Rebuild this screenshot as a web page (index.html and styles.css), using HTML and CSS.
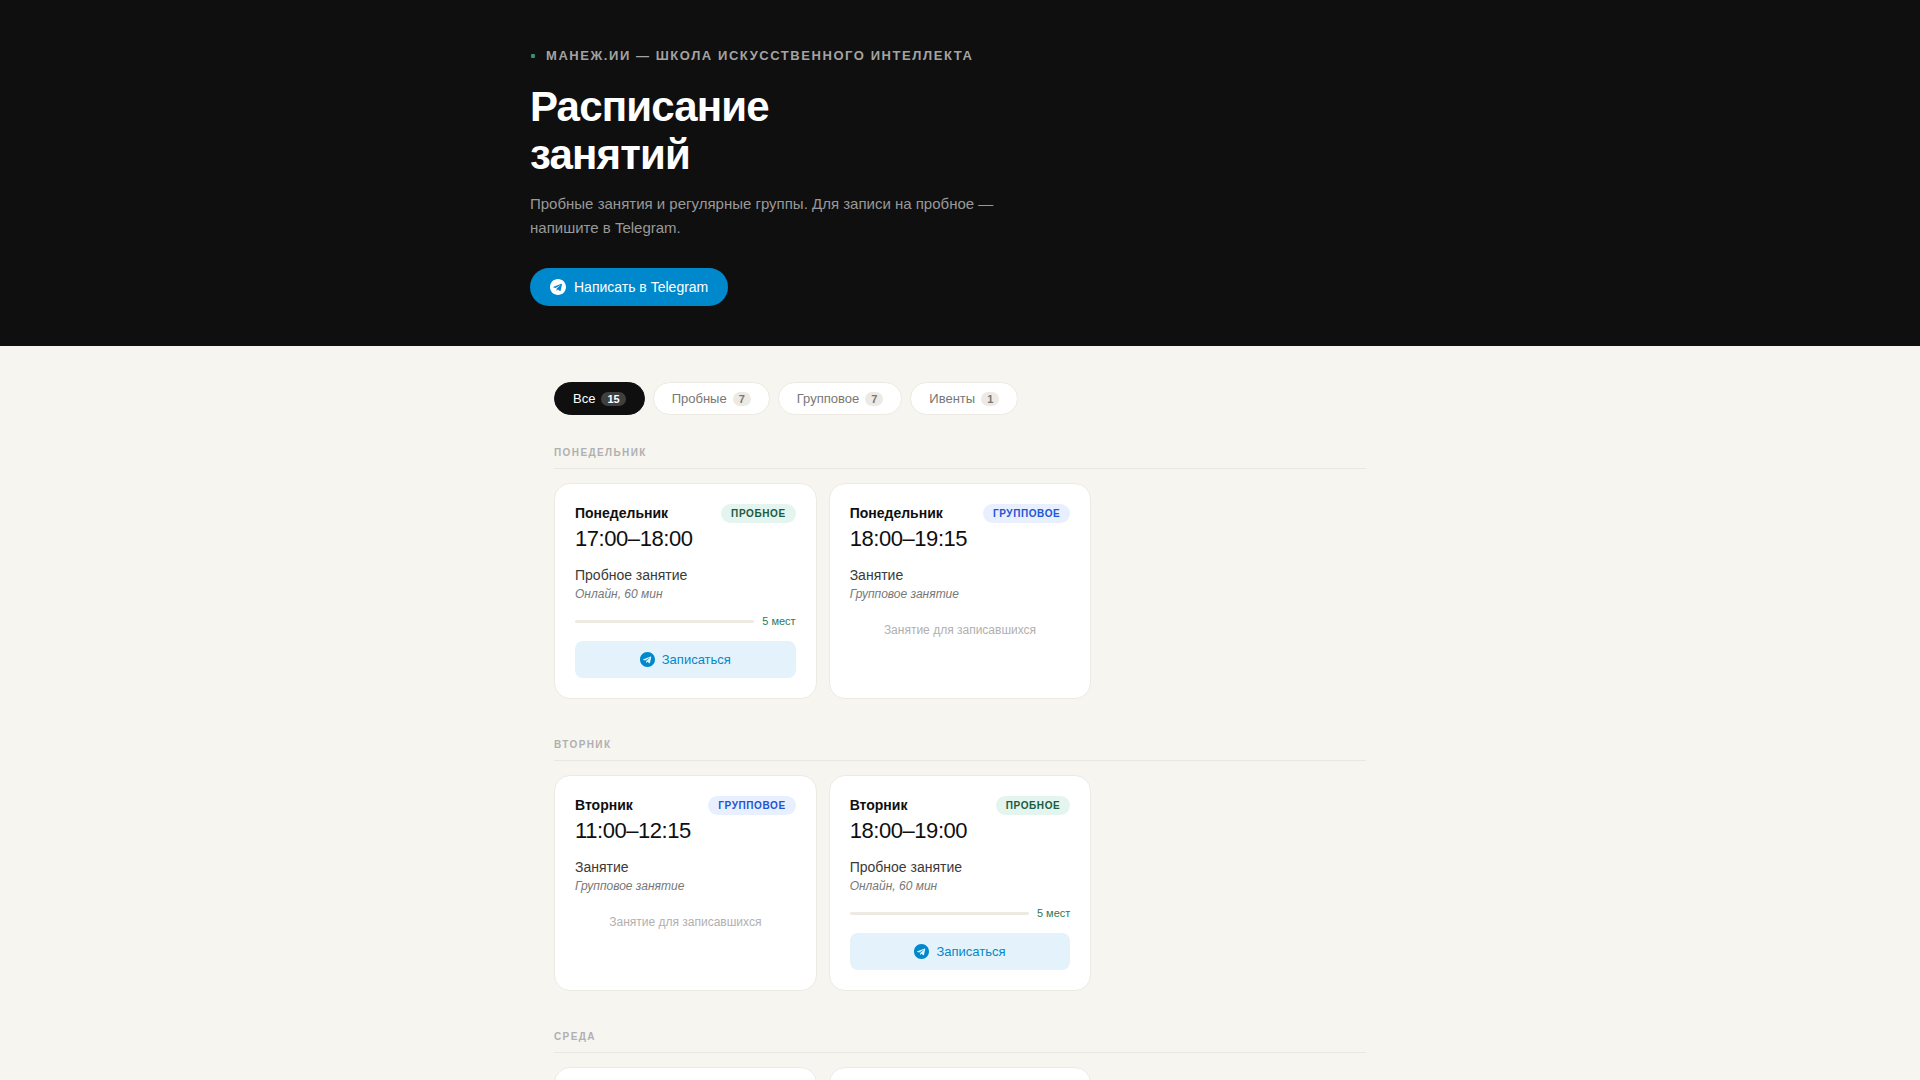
FILE: index.html
```html
<!DOCTYPE html>
<html lang="ru">
<head>
    <meta charset="UTF-8">
    <meta name="viewport" content="width=device-width, initial-scale=1.0">
    <title>Расписание занятий — Манеж.ИИ</title>
    <link rel="stylesheet" href="styles.css">
</head>
<body>
    <svg class="sprite" aria-hidden="true">
        <symbol id="tg" viewBox="0 0 24 24">
            <path d="M12 0C5.373 0 0 5.373 0 12s5.373 12 12 12 12-5.373 12-12S18.627 0 12 0zm5.894 8.221l-1.97 9.28c-.145.658-.537.818-1.084.508l-3-2.21-1.447 1.394c-.16.16-.295.295-.605.295l.213-3.053 5.56-5.023c.242-.213-.054-.333-.373-.12l-6.871 4.326-2.962-.924c-.643-.204-.657-.643.136-.953l11.57-4.461c.537-.194 1.006.131.833.941z"/>
        </symbol>
    </svg>

    <header class="hero">
        <div class="hero-inner">
            <div class="eyebrow"><span class="dot"></span>Манеж.ИИ — Школа искусственного интеллекта</div>
            <h1>Расписание<br>занятий</h1>
            <p class="hero-sub">Пробные занятия и регулярные группы. Для записи на пробное — напишите в Telegram.</p>
            <a class="tg-btn" href="#"><svg class="icon"><use href="#tg"/></svg>Написать в Telegram</a>
        </div>
    </header>

    <main class="main">
        <div class="filters">
            <button class="filter active" type="button">Все <span class="count">15</span></button>
            <button class="filter" type="button">Пробные <span class="count">7</span></button>
            <button class="filter" type="button">Групповое <span class="count">7</span></button>
            <button class="filter" type="button">Ивенты <span class="count">1</span></button>
        </div>

        <section class="day">
            <h2 class="day-title">Понедельник</h2>
            <div class="cards">
                <article class="card">
                    <div class="card-top">
                        <div>
                            <div class="card-day">Понедельник</div>
                            <div class="card-time">17:00–18:00</div>
                        </div>
                        <span class="badge trial">Пробное</span>
                    </div>
                    <div class="card-info">
                        <div class="card-name">Пробное занятие</div>
                        <div class="card-note">Онлайн, 60 мин</div>
                    </div>
                    <div class="seats"><div class="seats-bar"></div><span class="seats-text">5 мест</span></div>
                    <a class="book-btn" href="#"><svg class="icon small"><use href="#tg"/></svg>Записаться</a>
                </article>
                <article class="card">
                    <div class="card-top">
                        <div>
                            <div class="card-day">Понедельник</div>
                            <div class="card-time">18:00–19:15</div>
                        </div>
                        <span class="badge group">Групповое</span>
                    </div>
                    <div class="card-info">
                        <div class="card-name">Занятие</div>
                        <div class="card-note">Групповое занятие</div>
                    </div>
                    <div class="closed">Занятие для записавшихся</div>
                </article>
            </div>
        </section>

        <section class="day">
            <h2 class="day-title">Вторник</h2>
            <div class="cards">
                <article class="card">
                    <div class="card-top">
                        <div>
                            <div class="card-day">Вторник</div>
                            <div class="card-time">11:00–12:15</div>
                        </div>
                        <span class="badge group">Групповое</span>
                    </div>
                    <div class="card-info">
                        <div class="card-name">Занятие</div>
                        <div class="card-note">Групповое занятие</div>
                    </div>
                    <div class="closed">Занятие для записавшихся</div>
                </article>
                <article class="card">
                    <div class="card-top">
                        <div>
                            <div class="card-day">Вторник</div>
                            <div class="card-time">18:00–19:00</div>
                        </div>
                        <span class="badge trial">Пробное</span>
                    </div>
                    <div class="card-info">
                        <div class="card-name">Пробное занятие</div>
                        <div class="card-note">Онлайн, 60 мин</div>
                    </div>
                    <div class="seats"><div class="seats-bar"></div><span class="seats-text">5 мест</span></div>
                    <a class="book-btn" href="#"><svg class="icon small"><use href="#tg"/></svg>Записаться</a>
                </article>
            </div>
        </section>

        <section class="day">
            <h2 class="day-title">Среда</h2>
            <div class="cards">
                <article class="card"></article>
                <article class="card"></article>
            </div>
        </section>
    </main>
</body>
</html>
```
FILE: styles.css
```css
* {
    box-sizing: border-box;
    margin: 0;
    padding: 0;
}
body {
    font-family: "Liberation Sans", Arial, sans-serif;
    background: #f6f5f0;
    color: #0f0f0f;
    height: 100vh;
    overflow: hidden;
}
.sprite {
    display: none;
}
.icon {
    width: 16px;
    height: 16px;
    fill: currentColor;
    flex-shrink: 0;
}
.icon.small {
    width: 15px;
    height: 15px;
}

/* Header */
.hero {
    background: #0f0f0f;
    color: #fff;
    padding: 48px 24px 40px;
}
.hero-inner {
    max-width: 860px;
    margin: 0 auto;
}
.eyebrow {
    display: flex;
    align-items: center;
    gap: 10px;
    font-size: 13px;
    line-height: 15px;
    font-weight: bold;
    letter-spacing: 0.12em;
    text-transform: uppercase;
    color: #a3a3a3;
    margin-bottom: 20px;
}
.dot {
    width: 6px;
    height: 6px;
    border: 1px solid #0f0f0f;
    border-radius: 2px;
    background: #3d8f6b;
}
h1 {
    font-size: 42px;
    line-height: 48px;
    letter-spacing: -0.02em;
    margin-bottom: 13px;
}
.hero-sub {
    font-size: 15px;
    line-height: 24px;
    color: #999;
    max-width: 480px;
    margin-bottom: 28px;
}
.tg-btn {
    display: inline-flex;
    align-items: center;
    gap: 8px;
    padding: 11px 20px;
    border-radius: 100px;
    background: #0088cc;
    color: #fff;
    font-size: 14px;
    line-height: 16px;
    text-decoration: none;
}

/* Schedule */
.main {
    max-width: 860px;
    margin: 0 auto;
    padding: 36px 24px 60px;
}
.filters {
    display: flex;
    flex-wrap: wrap;
    gap: 8px;
    margin-bottom: 32px;
}
.filter {
    display: inline-flex;
    align-items: center;
    gap: 6px;
    padding: 8px 18px;
    border: 1px solid #eceae2;
    border-radius: 100px;
    background: #fff;
    color: #777;
    font-family: inherit;
    font-size: 13px;
    line-height: 15px;
    cursor: pointer;
}
.filter.active {
    background: #0f0f0f;
    border-color: #0f0f0f;
    color: #fff;
}
.count {
    padding: 1px 6px;
    border-radius: 10px;
    background: #eceae2;
    font-size: 11px;
    line-height: 12px;
    font-weight: bold;
}
.filter.active .count {
    background: #3f3f3f;
}
.day {
    margin-bottom: 40px;
}
.day-title {
    padding-bottom: 10px;
    margin-bottom: 14px;
    border-bottom: 1px solid #e9e7df;
    font-size: 10px;
    line-height: 11px;
    letter-spacing: 0.14em;
    text-transform: uppercase;
    color: #b0b0b0;
}
.cards {
    display: grid;
    grid-template-columns: repeat(auto-fill, minmax(240px, 1fr));
    gap: 12px;
}
.card {
    display: flex;
    flex-direction: column;
    min-height: 200px;
    padding: 20px;
    border: 1px solid #eceae2;
    border-radius: 16px;
    background: #fff;
}
.card-top {
    display: flex;
    justify-content: space-between;
    align-items: flex-start;
    margin-bottom: 13px;
}
.card-day {
    margin-bottom: 4px;
    font-size: 14px;
    line-height: 18px;
    font-weight: bold;
}
.card-time {
    font-size: 22px;
    line-height: 26px;
    letter-spacing: -0.02em;
}
.badge {
    padding: 4px 10px;
    border-radius: 20px;
    font-size: 10px;
    line-height: 11px;
    font-weight: bold;
    letter-spacing: 0.06em;
    text-transform: uppercase;
}
.badge.trial {
    background: #e4f4ee;
    color: #1a5c42;
}
.badge.group {
    background: #e8efff;
    color: #2255d4;
}
.card-info {
    margin-bottom: 12px;
}
.card-name {
    font-size: 14px;
    line-height: 20px;
    color: #3a3a3a;
}
.card-note {
    font-size: 12px;
    line-height: 18px;
    font-style: italic;
    color: #777;
}
.seats {
    display: flex;
    align-items: center;
    gap: 8px;
    margin-bottom: 14px;
}
.seats-bar {
    flex: 1;
    height: 3px;
    border-radius: 2px;
    background: #eceae2;
}
.seats-text {
    font-size: 11px;
    line-height: 12px;
    color: #2d7a58;
}
.book-btn {
    display: flex;
    align-items: center;
    justify-content: center;
    gap: 7px;
    padding: 11px;
    border-radius: 8px;
    background: #e4f3fb;
    color: #0088cc;
    font-size: 13px;
    line-height: 15px;
    text-decoration: none;
}
.closed {
    padding: 8px 0;
    text-align: center;
    font-size: 12px;
    line-height: 14px;
    color: #b0b0b0;
}
```
